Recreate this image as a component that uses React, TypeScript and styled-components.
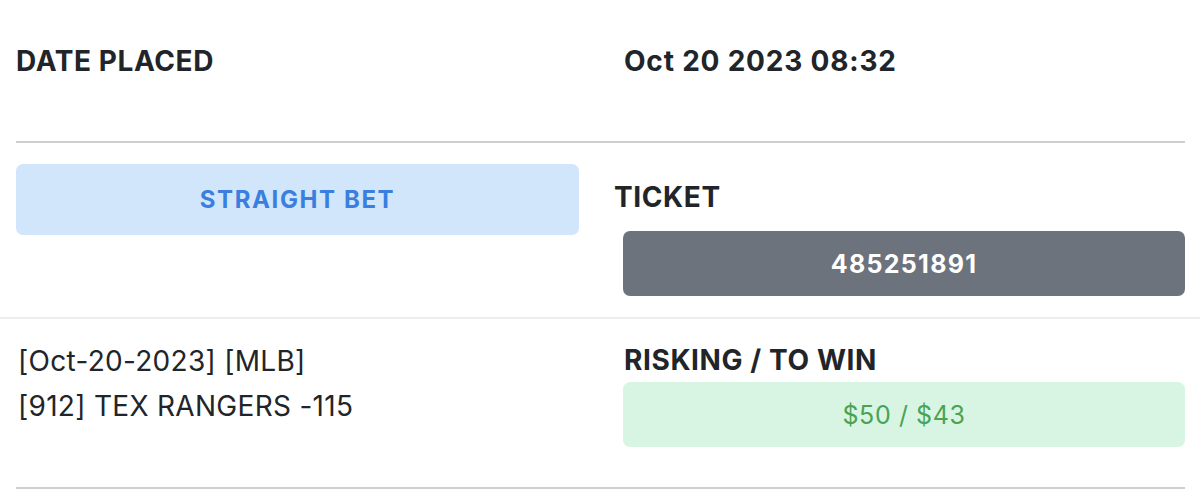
import React from "react";
import styled, { createGlobalStyle } from "styled-components";

const GlobalStyle = createGlobalStyle`
  html, body {
    margin: 0;
    padding: 0;
    background: #ffffff;
  }
  body {
    font-family: Inter, "Noto Sans", "Liberation Sans", sans-serif;
    color: #212529;
    -webkit-font-smoothing: antialiased;
  }
`;

const Page = styled.div`
  width: 1200px;
  height: 496px;
  padding: 0 15px 0 16px;
  box-sizing: border-box;
  overflow: hidden;
`;

const Row = styled.div<{ $divider: string; $full?: boolean }>`
  display: grid;
  grid-template-columns: 563px 1fr;
  column-gap: 35px;
  align-items: start;
  border-bottom: 2px solid ${(p) => p.$divider};
  ${(p) =>
    p.$full
      ? `margin: 0 -15px 0 -16px; padding-left: 16px; padding-right: 15px;`
      : ""}
`;

const DateRow = styled(Row)`
  padding-top: 45px;
  box-sizing: content-box;
  height: 96px;
`;

const Label = styled.div<{ $indent?: number }>`
  font-size: 28px;
  line-height: 32px;
  font-weight: 700;
  letter-spacing: 0.6px;
  color: #212529;
  padding-left: ${(p) => p.$indent ?? 0}px;
  text-transform: uppercase;
  white-space: nowrap;
`;

const Value = styled.div<{ $indent?: number }>`
  font-size: 28px;
  line-height: 32px;
  font-weight: 700;
  letter-spacing: 0.8px;
  color: #212529;
  padding-left: ${(p) => p.$indent ?? 0}px;
  white-space: nowrap;
`;

const TypeRow = styled(Row)`
  padding-top: 21px;
  padding-bottom: 21px;
`;

const Pill = styled.div<{
  $bg: string;
  $fg: string;
  $bold?: boolean;
  $h: number;
  $size: number;
  $spacing: number;
}>`
  height: ${(p) => p.$h}px;
  border-radius: 7px;
  background: ${(p) => p.$bg};
  color: ${(p) => p.$fg};
  display: flex;
  align-items: center;
  justify-content: center;
  font-size: ${(p) => p.$size}px;
  font-weight: ${(p) => (p.$bold ? 700 : 400)};
  letter-spacing: ${(p) => p.$spacing}px;
  white-space: nowrap;
`;

const RightCol = styled.div<{ $top?: number }>`
  display: flex;
  flex-direction: column;
  margin-top: ${(p) => p.$top ?? 0}px;
`;

const BoxWrap = styled.div<{ $top: number }>`
  margin-left: 9px;
  margin-top: ${(p) => p.$top}px;
`;

const SelectionRow = styled(Row)`
  padding-top: 20px;
  height: 148px;
  box-sizing: content-box;
`;

const Selection = styled.div`
  padding-left: 2px;
  font-size: 28px;
  line-height: 45px;
  font-weight: 400;
  letter-spacing: 0.3px;
  color: #212529;
`;

const Line = styled.div`
  white-space: nowrap;
`;

export default function App() {
  return (
    <>
      <GlobalStyle />
      <Page>
        <DateRow $divider="#cfcfcf">
          <Label>Date Placed</Label>
          <Value $indent={10}>Oct 20 2023 08:32</Value>
        </DateRow>
        <TypeRow $divider="#ececec" $full>
          <Pill $bg="#d2e6fb" $fg="#3a7fe0" $bold $h={71} $size={24} $spacing={1.6}>
            STRAIGHT BET
          </Pill>
          <RightCol $top={17}>
            <Label>Ticket</Label>
            <BoxWrap $top={18}>
              <Pill $bg="#6c737c" $fg="#ffffff" $bold $h={65} $size={25} $spacing={1.3}>
                485251891
              </Pill>
            </BoxWrap>
          </RightCol>
        </TypeRow>
        <SelectionRow $divider="#cfcfcf">
          <Selection>
            <Line>[Oct-20-2023] [MLB]</Line>
            <Line>[912] TEX RANGERS -115</Line>
          </Selection>
          <RightCol $top={5}>
            <Label $indent={10}>Risking / To Win</Label>
            <BoxWrap $top={6}>
              <Pill $bg="#d8f5e4" $fg="#4aa352" $h={65} $size={25} $spacing={0.6}>
                $50 / $43
              </Pill>
            </BoxWrap>
          </RightCol>
        </SelectionRow>
      </Page>
    </>
  );
}
